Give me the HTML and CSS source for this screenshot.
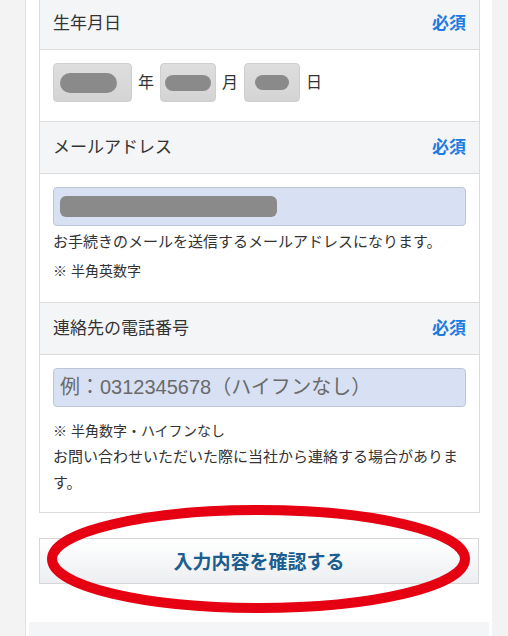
FILE: index.html
```html
<!DOCTYPE html>
<html lang="ja">
<head>
    <meta charset="UTF-8">
    <meta name="viewport" content="width=device-width, initial-scale=1.0">
    <title>お客様情報の入力</title>
    <link rel="stylesheet" href="styles.css">
</head>
<body>
    <div class="panel">
        <div class="form-box">
            <!-- 生年月日 -->
            <div class="form-head">
                <span class="head-label">生年月日</span>
                <span class="required">必須</span>
            </div>
            <div class="form-body birth-body">
                <div class="birth-row">
                    <div class="select-box year"><span class="blob"></span></div>
                    <span class="unit">年</span>
                    <div class="select-box month"><span class="blob"></span></div>
                    <span class="unit">月</span>
                    <div class="select-box day"><span class="blob"></span></div>
                    <span class="unit">日</span>
                </div>
            </div>

            <!-- メールアドレス -->
            <div class="form-head">
                <span class="head-label">メールアドレス</span>
                <span class="required">必須</span>
            </div>
            <div class="form-body">
                <div class="text-field"><span class="blob blob-mail"></span></div>
                <p class="note note-first">お手続きのメールを送信するメールアドレスになります。</p>
                <p class="note note-small">※ 半角英数字</p>
            </div>

            <!-- 連絡先の電話番号 -->
            <div class="form-head">
                <span class="head-label">連絡先の電話番号</span>
                <span class="required">必須</span>
            </div>
            <div class="form-body tel-body">
                <input type="tel" class="text-field tel-input" placeholder="例：0312345678（ハイフンなし）">
                <p class="note note-small tel-note">※ 半角数字・ハイフンなし</p>
                <p class="note">お問い合わせいただいた際に当社から連絡する場合があります。</p>
            </div>
        </div>

        <div class="submit-wrap">
            <button class="submit-button">入力内容を確認する</button>
            <!-- red circle annotation -->
            <svg class="mark" width="423" height="108" viewBox="0 0 423 108">
                <ellipse cx="211.5" cy="54" rx="206.5" ry="49" fill="none" stroke="#e50012" stroke-width="10"/>
            </svg>
        </div>

        <div class="next-section"></div>
    </div>
</body>
</html>
```

FILE: styles.css
```css
/* General reset */
* {
    box-sizing: border-box;
    margin: 0;
    padding: 0;
}

body {
    font-family: "Liberation Sans", "Noto Sans CJK JP", sans-serif;
    background-color: #f3f3f3;
    color: #333;
    overflow: hidden;
}

/* White column */
.panel {
    width: 467px;
    margin-left: 25px;
    padding: 0 12px 0 13px;
    background-color: #ffffff;
    border-left: 1px solid #e2e2e2;
}

/* Form table */
.form-box {
    margin-top: -2px;
    border: 1px solid #dcdcdc;
    border-top: none;
}

.form-head {
    display: flex;
    justify-content: space-between;
    align-items: center;
    height: 52px;
    padding: 0 13px 4px;
    background-color: #f4f5f7;
    border-bottom: 1px solid #dcdcdc;
}

.head-label {
    font-size: 17px;
    color: #333;
}

.required {
    font-size: 17px;
    font-weight: bold;
    color: #1f7be0;
}

.form-body {
    padding: 13px 13px 18px;
    border-bottom: 1px solid #dcdcdc;
}

.form-body:last-child {
    border-bottom: none;
}

.birth-body {
    padding-bottom: 19px;
}

.tel-body {
    padding-bottom: 16px;
}

/* Birthdate selects */
.birth-row {
    display: flex;
    align-items: center;
    gap: 6px;
}

.select-box {
    display: flex;
    align-items: center;
    height: 39px;
    padding-left: 6px;
    background: linear-gradient(#dedede, #d4d4d4);
    border: 1px solid #cfcfcf;
    border-radius: 4px;
}

.select-box.year { width: 79px; }
.select-box.month { width: 56px; padding-left: 4px; }
.select-box.day { width: 56px; padding-left: 10px; }

.year .blob { width: 57px; height: 20px; }
.month .blob { width: 46px; height: 16px; }
.day .blob { width: 34px; height: 15px; }

.unit {
    font-size: 16px;
    width: 16px;
    margin-bottom: 3px;
    color: #333;
}

/* Redacted values */
.blob {
    display: block;
    background-color: #8a8a8a;
    border-radius: 10px;
}

.blob-mail {
    width: 217px;
    height: 21px;
    border-radius: 6px;
}

/* Text inputs */
.text-field {
    display: flex;
    align-items: center;
    width: 100%;
    height: 39px;
    padding: 0 6px;
    background-color: #d7e1f3;
    border: 1px solid #bcc6d8;
    border-radius: 4px;
    font-family: inherit;
}

.tel-input {
    font-size: 20px;
    color: #333;
    outline: none;
}

.tel-input::placeholder {
    color: #6a6a6a;
}

/* Notes */
.note {
    font-size: 15px;
    line-height: 26px;
    color: #333;
}

.note-first {
    margin-top: 3px;
}

.note-small {
    font-size: 14px;
    margin-top: 3px;
}

.tel-note {
    margin-top: 11px;
}

/* Submit button */
.submit-wrap {
    position: relative;
    width: 440px;
    margin-top: 25px;
}

.submit-button {
    display: block;
    width: 100%;
    height: 46px;
    padding-bottom: 2px;
    font-family: inherit;
    font-size: 19px;
    font-weight: bold;
    color: #1b5e8f;
    background: linear-gradient(#ffffff, #eceef1);
    border: 1px solid #d6d6d6;
    cursor: pointer;
}

.mark {
    position: absolute;
    left: 8px;
    top: -33px;
    pointer-events: none;
}

.next-section {
    height: 20px;
    margin: 38px -9px 0 -10px;
    background-color: #f4f5f7;
}
```
